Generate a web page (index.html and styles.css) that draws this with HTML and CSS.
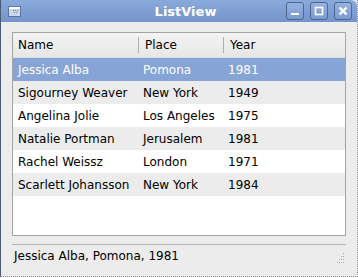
FILE: index.html
```html
<!DOCTYPE html>
<html lang="en">
<head>
    <meta charset="UTF-8">
    <title>ListView</title>
    <link rel="stylesheet" href="styles.css">
</head>
<body>
    <div class="window">
        <div class="title-bar">
            <div class="app-icon">
                <svg width="13" height="11" viewBox="0 0 13 11">
                    <rect x="0.5" y="0.5" width="12" height="10" fill="none" stroke="#3d4f6e" stroke-dasharray="1 1"/>
                    <rect x="1" y="1" width="11" height="2" fill="#ffffff"/>
                    <rect x="1" y="3" width="11" height="7" fill="#c8d6ee"/>
                    <rect x="5" y="4" width="1" height="1" fill="#6a7da0"/>
                    <rect x="7" y="4" width="1" height="1" fill="#6a7da0"/>
                    <rect x="9" y="4" width="1" height="1" fill="#6a7da0"/>
                    <rect x="6" y="6" width="1" height="1" fill="#6a7da0"/>
                    <rect x="8" y="6" width="1" height="1" fill="#6a7da0"/>
                </svg>
            </div>
            <h1>ListView</h1>
            <div class="buttons">
                <span class="wbtn">
                    <svg width="16" height="16" viewBox="0 0 16 16"><rect x="4" y="10" width="8" height="2" fill="#ffffff"/></svg>
                </span>
                <span class="wbtn">
                    <svg width="16" height="16" viewBox="0 0 16 16"><rect x="4.5" y="4.5" width="7" height="7" fill="none" stroke="#ffffff" stroke-width="1.6"/></svg>
                </span>
                <span class="wbtn">
                    <svg width="16" height="16" viewBox="0 0 16 16"><path d="M4.5 4.5 L11.5 11.5 M11.5 4.5 L4.5 11.5" stroke="#ffffff" stroke-width="2.4"/></svg>
                </span>
            </div>
        </div>
        <div class="client">
            <div class="list">
                <div class="row head">
                    <div>Name</div>
                    <div class="sep">Place</div>
                    <div class="sep">Year</div>
                </div>
                <div class="row selected"><div>Jessica Alba</div><div>Pomona</div><div>1981</div></div>
                <div class="row alt"><div>Sigourney Weaver</div><div>New York</div><div>1949</div></div>
                <div class="row"><div>Angelina Jolie</div><div>Los Angeles</div><div>1975</div></div>
                <div class="row alt"><div>Natalie Portman</div><div>Jerusalem</div><div>1981</div></div>
                <div class="row"><div>Rachel Weissz</div><div>London</div><div>1971</div></div>
                <div class="row alt"><div>Scarlett Johansson</div><div>New York</div><div>1984</div></div>
            </div>
            <div class="status">
                <span>Jessica Alba, Pomona, 1981</span>
                <svg class="grip" width="11" height="11" viewBox="0 0 11 11" fill="#a8a8a8">
                    <rect x="8" y="0" width="1" height="1"/>
                    <rect x="6" y="3" width="1" height="1"/><rect x="8" y="3" width="1" height="1"/>
                    <rect x="4" y="6" width="1" height="1"/><rect x="6" y="6" width="1" height="1"/><rect x="8" y="6" width="1" height="1"/>
                    <rect x="2" y="9" width="1" height="1"/><rect x="4" y="9" width="1" height="1"/><rect x="6" y="9" width="1" height="1"/><rect x="8" y="9" width="1" height="1"/>
                </svg>
            </div>
        </div>
    </div>
</body>
</html>
```

FILE: styles.css
```css
body {
    margin: 0;
    background-color: #ffffff;
    font-family: "DejaVu Sans", Verdana, sans-serif;
    font-size: 12px;
    color: #000000;
}
.window {
    width: 356px;
    height: 276px;
    border-left: 1px solid #4a5a74;
    border-right: 1px dotted #8a8a8a;
    border-bottom: 1px dotted #8a8a8a;
    background-color: #ececec;
    display: flex;
    flex-direction: column;
}
.title-bar {
    height: 22px;
    background: linear-gradient(#8aa9db, #7494cb);
    border-top-right-radius: 6px;
    display: flex;
    align-items: center;
}
.app-icon {
    width: 24px;
    padding-left: 7px;
    box-sizing: border-box;
    display: flex;
}
.title-bar h1 {
    flex: 1;
    margin: 0;
    padding-left: 60px;
    font-size: 13px;
    font-weight: bold;
    color: #ffffff;
    text-align: center;
}
.buttons {
    display: flex;
    gap: 6px;
    padding-right: 5px;
}
.wbtn {
    width: 16px;
    height: 16px;
    border: 1px solid #4e6690;
    border-radius: 3px;
    background: linear-gradient(#97b3e0, #7a99cf);
    display: flex;
}
.client {
    flex: 1;
    padding: 10px 11px 0 11px;
    display: flex;
    flex-direction: column;
}
.list {
    height: 202px;
    border: 1px solid #a4a4a4;
    background-color: #ffffff;
}
.row {
    display: grid;
    grid-template-columns: 125px 85px 1fr;
    height: 23px;
    align-items: center;
}
.row div {
    padding-left: 5px;
    white-space: nowrap;
}
.head {
    height: 24px;
    background: linear-gradient(#f4f4f4, #e6e6e6);
    border-bottom: 1px solid #dcdcdc;
}
.head .sep {
    border-left: 1px solid #b0b0b0;
    padding-left: 6px;
    height: 16px;
    line-height: 16px;
}
.selected {
    background-color: #86a4d6;
    color: #ffffff;
}
.alt {
    background-color: #ececec;
}
.status {
    margin-top: 8px;
    border-top: 1px solid #b4b4b4;
    display: flex;
    justify-content: space-between;
    align-items: flex-start;
    padding: 4px 0 0 2px;
}
.grip {
    margin-top: 4px;
}
```
